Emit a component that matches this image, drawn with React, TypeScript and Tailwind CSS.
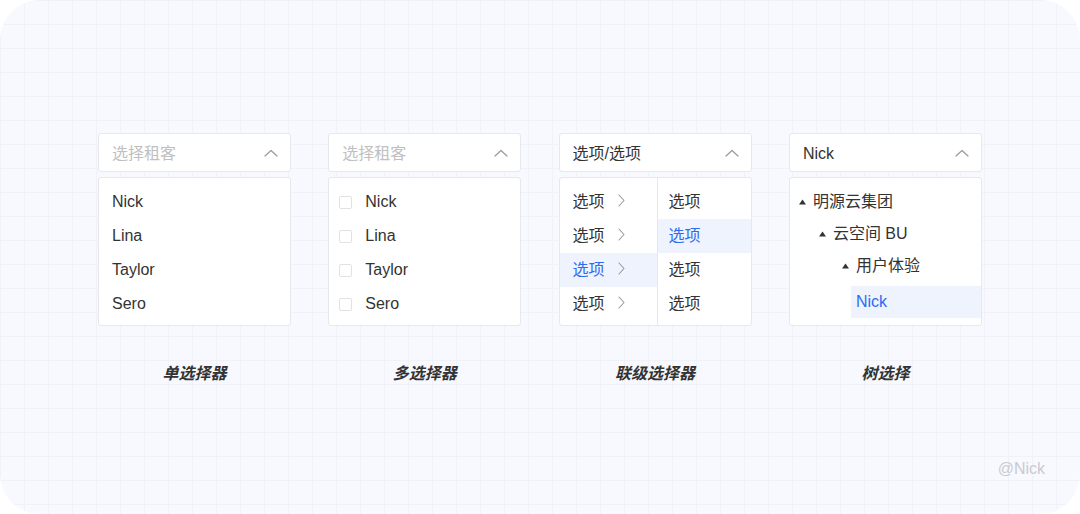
import React from 'react';

const font = { fontFamily: '"Liberation Sans", "Noto Sans CJK SC", sans-serif' };

const names = ['Nick', 'Lina', 'Taylor', 'Sero'];

function ChevronUp() {
  return (
    <svg width="14" height="8" viewBox="0 0 14 8" fill="none" className="shrink-0">
      <path d="M1 7 L7 1.5 L13 7" stroke="#9a9a9a" strokeWidth="1.2" strokeLinecap="round" strokeLinejoin="round" />
    </svg>
  );
}

function ChevronRight() {
  return (
    <svg width="7" height="13" viewBox="0 0 7 13" fill="none" className="shrink-0">
      <path d="M1 1 L6 6.5 L1 12" stroke="#9a9a9a" strokeWidth="1.1" strokeLinecap="round" strokeLinejoin="round" />
    </svg>
  );
}

function Caret() {
  return (
    <svg width="7" height="6" viewBox="0 0 7 6" className="shrink-0">
      <polygon points="3.5,0.5 7,5.5 0,5.5" fill="#333" />
    </svg>
  );
}

function SelectBox({ value, placeholder }: { value?: string; placeholder?: string }) {
  return (
    <div className="h-[39px] bg-white border border-[#e6e8ee] rounded-[3px] flex items-center justify-between pl-[13px] pr-[12px]">
      <span className={`pt-[2px] text-[16px] ${value ? 'text-[#333]' : 'text-[#c0c0c0]'}`}>{value ?? placeholder}</span>
      <ChevronUp />
    </div>
  );
}

function Panel({ children, className = '' }: { children: React.ReactNode; className?: string }) {
  return (
    <div className={`mt-[5px] h-[149px] bg-white border border-[#e6e8ee] rounded-[3px] overflow-hidden ${className}`}>
      {children}
    </div>
  );
}

function Label({ text }: { text: string }) {
  return <div className="mt-[36px] text-center text-[16px] font-bold italic text-[#333]">{text}</div>;
}

function SingleSelect() {
  return (
    <div className="w-[193px]">
      <SelectBox placeholder="选择租客" />
      <Panel className="pt-[7px]">
        {names.map((n) => (
          <div key={n} className="h-[34px] flex items-center pl-[13px] text-[16px] text-[#333]">
            {n}
          </div>
        ))}
      </Panel>
      <Label text="单选择器" />
    </div>
  );
}

function MultiSelect() {
  return (
    <div className="w-[193px]">
      <SelectBox placeholder="选择租客" />
      <Panel className="pt-[7px]">
        {names.map((n) => (
          <div key={n} className="h-[34px] flex items-center pl-[10px] gap-[13px] text-[16px] text-[#333]">
            <span className="w-[13px] h-[13px] border border-[#e2e2e6] rounded-[2px] bg-white" />
            {n}
          </div>
        ))}
      </Panel>
      <Label text="多选择器" />
    </div>
  );
}

function CascadeSelect() {
  const rows = [0, 1, 2, 3];
  return (
    <div className="w-[193px]">
      <SelectBox value="选项/选项" />
      <Panel className="flex">
        <div className="w-[98px] border-r border-[#e6e8ee] pt-[7px]">
          {rows.map((i) => (
            <div
              key={i}
              className={`h-[34px] flex items-center pl-[13px] gap-[13px] text-[16px] ${
                i === 2 ? 'bg-[#eef3fe] text-[#2d6cf0]' : 'text-[#333]'
              }`}
            >
              <span>选项</span>
              <span className="-mt-[4px]">
                <ChevronRight />
              </span>
            </div>
          ))}
        </div>
        <div className="flex-1 pt-[7px]">
          {rows.map((i) => (
            <div
              key={i}
              className={`h-[34px] flex items-center pl-[11px] text-[16px] ${
                i === 1 ? 'bg-[#eef3fe] text-[#2d6cf0]' : 'text-[#333]'
              }`}
            >
              选项
            </div>
          ))}
        </div>
      </Panel>
      <Label text="联级选择器" />
    </div>
  );
}

function TreeSelect() {
  return (
    <div className="w-[193px]">
      <SelectBox value="Nick" />
      <Panel className="pt-[8px]">
        <div className="h-[32px] flex items-center pl-[9px] gap-[7px] text-[16px] text-[#333]">
          <Caret />
          明源云集团
        </div>
        <div className="h-[32px] flex items-center pl-[29px] gap-[7px] text-[16px] text-[#333]">
          <Caret />
          云空间 BU
        </div>
        <div className="h-[31px] flex items-center pl-[52px] gap-[7px] text-[16px] text-[#333]">
          <Caret />
          用户体验
        </div>
        <div className="mt-[5px] ml-[61px] h-[32px] flex items-center pl-[5px] bg-[#eef3fe] text-[16px] text-[#2d6cf0]">
          Nick
        </div>
      </Panel>
      <Label text="树选择" />
    </div>
  );
}

export default function App() {
  return (
    <div className="w-[1080px] h-[514px] bg-white" style={font}>
      <div className="relative w-full h-full rounded-[40px] overflow-hidden bg-[#f8f9fe] bg-[linear-gradient(to_right,#f0f2f8_1px,transparent_1px),linear-gradient(to_bottom,#f0f2f8_1px,transparent_1px)] bg-[size:24px_24px]">
        <div className="flex pl-[98px] gap-[37.3px] pt-[133px]">
          <SingleSelect />
          <MultiSelect />
          <CascadeSelect />
          <TreeSelect />
        </div>
        <div className="absolute right-[35px] bottom-[33px] text-[16px] text-[#c9cad0]">@Nick</div>
      </div>
    </div>
  );
}
